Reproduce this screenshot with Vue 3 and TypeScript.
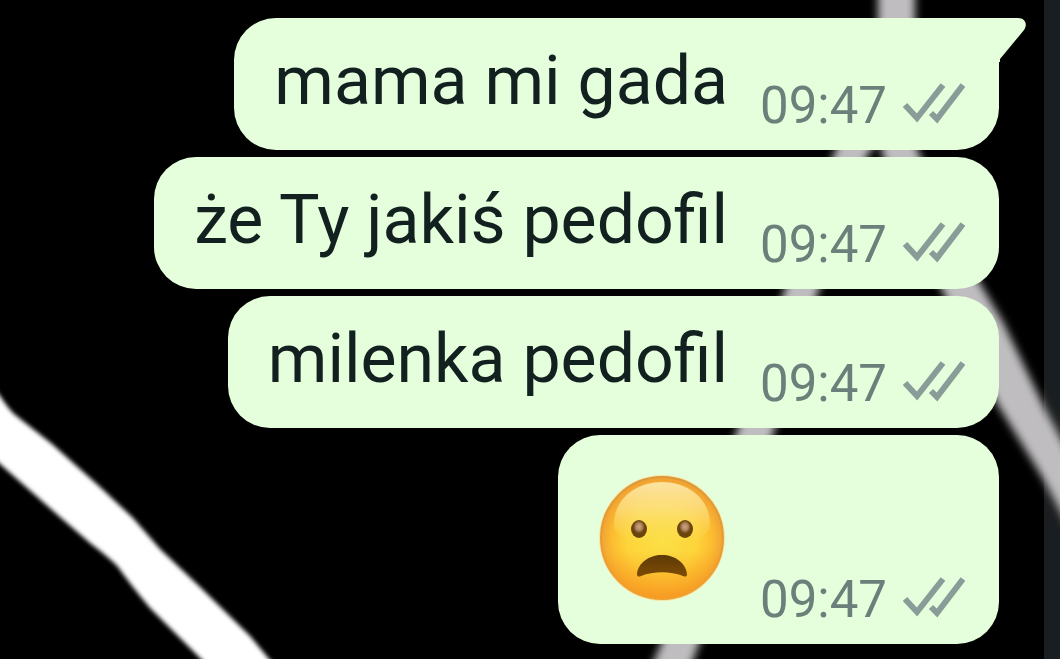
<script setup lang="ts">
interface Message {
  id: number
  text: string
  time: string
  emoji?: boolean
}

const messages: Message[] = [
  { id: 1, text: 'mama mi gada', time: '09:47' },
  { id: 2, text: 'że Ty jakiś pedofil', time: '09:47' },
  { id: 3, text: 'milenka pedofil', time: '09:47' },
  { id: 4, text: '😦', time: '09:47', emoji: true },
]
</script>

<template>
  <main class="chat">
    <svg class="wallpaper" viewBox="0 0 1060 659" preserveAspectRatio="xMidYMid slice" aria-hidden="true">
      <defs>
        <filter id="soft" x="-10%" y="-10%" width="120%" height="120%">
          <feGaussianBlur stdDeviation="4" />
        </filter>
        <filter id="crisp" x="-10%" y="-10%" width="120%" height="120%">
          <feGaussianBlur stdDeviation="2" />
        </filter>
      </defs>
      <path
        filter="url(#crisp)"
        fill="#fff"
        d="M-20 370 L0 396 Q8 408 14 414 L52 444 L100 487 L133 518 L160 549 L200 587 L250 636 L269 659 L290 681 L224 681 L201 659 L150 608 Q130 584 118 567 Q112 560 90 543 L60 517 L0 464 L-20 448Z"
      />
      <g filter="url(#soft)" fill="#bfbdc0">
        <path d="M878 -20 H915 V90 L868 154 L818 292 L774 431 L699 644 L682 690 H642 L661 644 L737 431 L784 292 L834 154 L878 60Z" />
        <path d="M880 100 L905 110 L919 154 L978 280 L1003 322 L1044 407 L1060 437 L1080 475 L1080 550 L1060 510 L1044 480 L998 405 L943 292 L882 154Z" />
      </g>
    </svg>

    <ol class="thread">
      <li v-for="(m, i) in messages" :key="m.id" class="bubble" :class="{ first: i === 0 }">
        <svg v-if="i === 0" class="tail" viewBox="0 0 28 44" aria-hidden="true">
          <path d="M0 0 H19 C26 0 29 6 25 12 L1 41 V44 H0Z" />
        </svg>

        <svg v-if="m.emoji" class="emoji" viewBox="0 0 128 128" role="img" :aria-label="m.text">
          <defs>
            <radialGradient id="face" cx="50%" cy="52%" r="51%">
              <stop offset="0" stop-color="#fbdf45" />
              <stop offset="0.55" stop-color="#fdd53a" />
              <stop offset="0.8" stop-color="#fcbd31" />
              <stop offset="1" stop-color="#f0a032" />
            </radialGradient>
            <linearGradient id="low" x1="0" y1="0" x2="0" y2="1">
              <stop offset="0.6" stop-color="#f7941d" stop-opacity="0" />
              <stop offset="1" stop-color="#f7941d" stop-opacity="0.7" />
            </linearGradient>
            <linearGradient id="shine" x1="0" y1="0" x2="0" y2="1">
              <stop offset="0" stop-color="#fde6a8" stop-opacity="0.95" />
              <stop offset="0.45" stop-color="#fce38a" stop-opacity="0.7" />
              <stop offset="1" stop-color="#fbe05a" stop-opacity="0" />
            </linearGradient>
            <linearGradient id="rim" x1="0" y1="0" x2="0" y2="1">
              <stop offset="0" stop-color="#d9993a" />
              <stop offset="1" stop-color="#efa02f" />
            </linearGradient>
            <radialGradient id="eye" cx="50%" cy="38%" r="55%">
              <stop offset="0" stop-color="#cda684" />
              <stop offset="0.35" stop-color="#b08660" />
              <stop offset="0.65" stop-color="#6b450f" />
              <stop offset="1" stop-color="#684509" />
            </radialGradient>
            <linearGradient id="mouth" x1="0" y1="0" x2="0" y2="1">
              <stop offset="0" stop-color="#5e3a06" />
              <stop offset="1" stop-color="#7d4c04" />
            </linearGradient>
          </defs>
          <circle cx="64" cy="64" r="63" fill="#fbe3a0" />
          <circle cx="64" cy="64" r="61" fill="url(#face)" />
          <circle cx="64" cy="64" r="61" fill="url(#low)" />
          <circle cx="64" cy="64" r="61" fill="none" stroke="url(#rim)" stroke-width="2" />
          <path
            fill="url(#shine)"
            d="M64 8 C91 8 112 26 112 50 C112 64 92 70 64 70 C36 70 16 64 16 50 C16 26 37 8 64 8Z"
          />
          <ellipse cx="41" cy="55" rx="8" ry="9" fill="url(#eye)" />
          <ellipse cx="87" cy="55" rx="8" ry="9" fill="url(#eye)" />
          <path
            fill="url(#mouth)"
            d="M39 100 C40 89 51 81 64 81 C77 81 88 89 89 100 C89 103 87 103 85 102 C72 97 56 97 43 102 C41 103 39 103 39 100Z"
          />
        </svg>
        <p v-else class="text">{{ m.text }}</p>

        <div class="meta">
          <time :datetime="m.time">{{ m.time }}</time>
          <svg class="ticks" viewBox="0 0 62 42" aria-hidden="true">
            <path d="M2 23 L14 36 L40 3 M28 31 L34 37 L60 3" />
          </svg>
        </div>
      </li>
    </ol>
    <div class="edge"></div>
  </main>
</template>

<style>
body {
  margin: 0;
  background: #000;
}
</style>

<style scoped>
.chat {
  position: relative;
  display: flex;
  min-height: 100vh;
  overflow: hidden;
  background: #000;
  font-family: Roboto, "Noto Sans", sans-serif;
}

.wallpaper {
  position: absolute;
  inset: 0;
  z-index: 1;
  width: 100%;
  height: 100%;
}

.thread {
  position: relative;
  z-index: 2;
  flex: 1;
  display: flex;
  flex-direction: column;
  align-items: flex-end;
  gap: 7px;
  margin: 0;
  padding: 18px 45px 15px 16px;
  list-style: none;
}

.edge {
  width: 16px;
  background: #1b1e20;
}

.bubble {
  position: relative;
  display: flex;
  align-items: flex-end;
  gap: 32px;
  padding: 23px 34px 14px 40px;
  border-radius: 42px;
  background: #e5ffdc;
}

.first {
  border-top-right-radius: 0;
}

.tail {
  position: absolute;
  top: 0;
  left: 100%;
  width: 28px;
  height: 44px;
  fill: #e5ffdc;
}

.text {
  margin: 0 0 15px;
  color: #12201f;
  font-size: 68px;
  line-height: 80px;
}

.emoji {
  width: 128px;
  height: 128px;
  margin: 16px 2px 28px 0;
}

.meta {
  display: flex;
  align-items: center;
  gap: 16px;
  color: #6b7f7b;
  font-size: 51px;
  line-height: 60px;
}

.ticks {
  width: 62px;
  height: 42px;
  margin-bottom: 6px;
  fill: none;
  stroke: #8a9c98;
  stroke-width: 6;
}
</style>
